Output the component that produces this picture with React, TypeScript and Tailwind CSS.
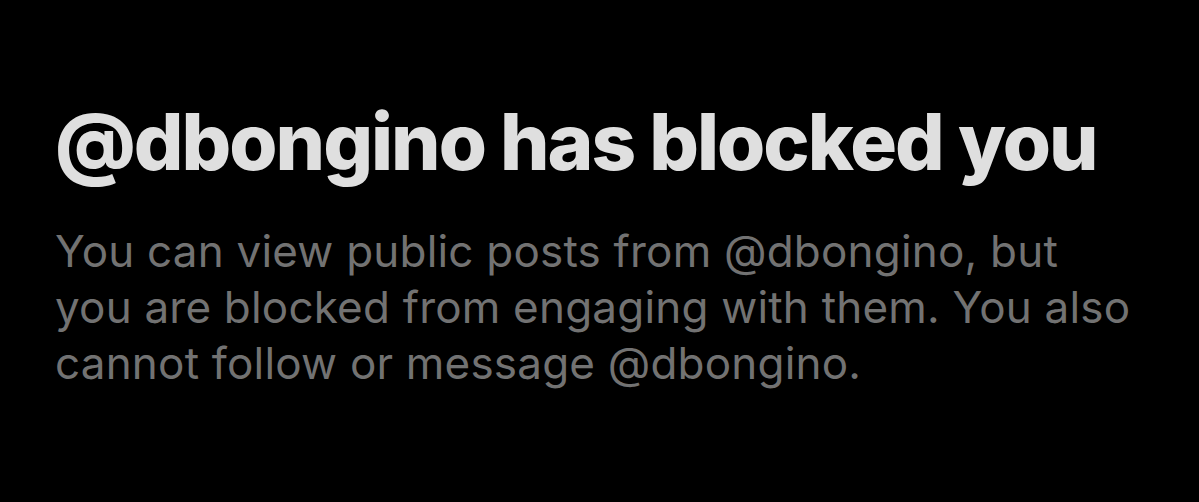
export default function App() {
    return (
        <div className="w-[1199px] h-[502px] bg-black overflow-hidden pl-[55px] pt-[98px]" style={{ fontFamily: 'Inter, "Noto Sans", sans-serif' }}>
            <h1 className="text-[78px] leading-[88px] font-extrabold text-[#dfdfdf] tracking-[-2px] whitespace-nowrap">
                @dbongino has blocked you
            </h1>
            <p className="mt-[37px] w-[1082px] text-[44px] leading-[56px] text-[#727272] tracking-[0.2px]">
                You can view public posts from @dbongino, but you are blocked from engaging with them. You also cannot follow or message @dbongino.
            </p>
        </div>
    );
}
